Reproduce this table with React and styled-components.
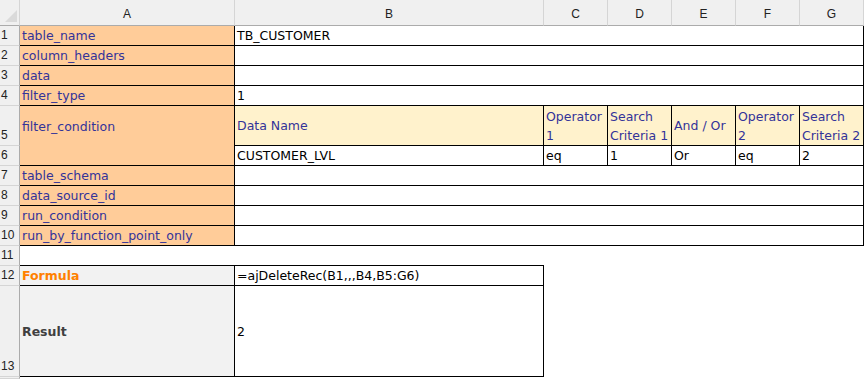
import React from 'react'
import styled, { createGlobalStyle } from 'styled-components'

const Global = createGlobalStyle`
  html, body {
    margin: 0;
    padding: 0;
    background: #fff;
    overflow: hidden;
  }
  #root {
    height: 100vh;
  }
`

const Sheet = styled.div`
  display: grid;
  grid-template-columns: 20px 215px 309px repeat(5, 64px);
  grid-template-rows: 26px repeat(4, 20px) 40px repeat(7, 20px) 91px 1fr;
  height: 100vh;
  width: 864px;
  font-family: "DejaVu Sans", "Liberation Sans", sans-serif;
  font-size: 12.5px;
  color: #000;
  background: #fff;
`

const Corner = styled.div`
  background: #f0f0f0;
  border-right: 1px solid #d5d5d5;
  border-bottom: 1px solid #ababab;
  box-sizing: border-box;
  display: flex;
  align-items: flex-end;
  justify-content: flex-end;
  padding: 0 2px 3px 0;

  svg {
    display: block;
  }
`

const ColHead = styled.div`
  background: #f0f0f0;
  border-right: 1px solid #d5d5d5;
  border-bottom: 1px solid #ababab;
  box-sizing: border-box;
  display: flex;
  align-items: center;
  justify-content: center;
  padding-top: 2px;
  font-family: "Liberation Sans", Arial, sans-serif;
  font-size: 12px;
  color: #222;
`

const RowHead = styled.div`
  background: #f0f0f0;
  border-right: 1px solid #ababab;
  border-bottom: 1px solid #d5d5d5;
  box-sizing: border-box;
  display: flex;
  align-items: flex-end;
  padding: 0 0 1px 1px;
  font-family: "Liberation Sans", Arial, sans-serif;
  font-size: 12px;
  line-height: 17px;
  color: #222;
`

const Cell = styled.div`
  grid-column: span ${p => p.$span || 1};
  box-sizing: border-box;
  border-right: ${p => (p.$r ? '1px solid #000' : 'none')};
  border-bottom: ${p => (p.$b ? '1px solid #000' : 'none')};
  background: ${p => p.$bg || 'transparent'};
  color: ${p => p.$color || '#000'};
  font-weight: ${p => (p.$bold ? 700 : 400)};
  display: flex;
  align-items: ${p => (p.$center ? 'center' : 'flex-end')};
  padding: 0 2px;
  line-height: ${p => (p.$center ? '19px' : '18px')};
  white-space: ${p => (p.$wrap ? 'normal' : 'nowrap')};
  overflow: hidden;
`

const LABEL = { $bg: '#ffcc99', $color: '#333399', $r: true, $b: true }
const HEAD = { $bg: '#fff2cc', $color: '#333399', $r: true, $b: true, $center: true, $wrap: true }
const VALUE = { $r: true, $b: true }

const rows = [
  [{ t: 'table_name', ...LABEL }, { t: 'TB_CUSTOMER', $span: 6, ...VALUE }],
  [{ t: 'column_headers', ...LABEL }, { t: '', $span: 6, ...VALUE }],
  [{ t: 'data', ...LABEL }, { t: '', $span: 6, ...VALUE }],
  [{ t: 'filter_type', ...LABEL }, { t: '1', $span: 6, ...VALUE }],
  [
    { t: 'filter_condition', ...LABEL, $b: false, $center: true },
    { t: 'Data Name', ...HEAD },
    { t: 'Operator 1', ...HEAD },
    { t: 'Search Criteria 1', ...HEAD },
    { t: 'And / Or', ...HEAD },
    { t: 'Operator 2', ...HEAD },
    { t: 'Search Criteria 2', ...HEAD },
  ],
  [
    { t: '', ...LABEL },
    { t: 'CUSTOMER_LVL', ...VALUE },
    { t: 'eq', ...VALUE },
    { t: '1', ...VALUE },
    { t: 'Or', ...VALUE },
    { t: 'eq', ...VALUE },
    { t: '2', ...VALUE },
  ],
  [{ t: 'table_schema', ...LABEL }, { t: '', $span: 6, ...VALUE }],
  [{ t: 'data_source_id', ...LABEL }, { t: '', $span: 6, ...VALUE }],
  [{ t: 'run_condition', ...LABEL }, { t: '', $span: 6, ...VALUE }],
  [{ t: 'run_by_function_point_only', ...LABEL }, { t: '', $span: 6, ...VALUE }],
  [{ t: '', $b: true }, { t: '', $b: true }, { t: '', $span: 5 }],
  [
    { t: 'Formula', $bg: '#f2f2f2', $color: '#ff8000', $bold: true, $r: true, $b: true },
    { t: '=ajDeleteRec(B1,,,B4,B5:G6)', $r: true, $b: true },
    { t: '', $span: 5 },
  ],
  [
    { t: 'Result', $bg: '#f2f2f2', $color: '#404040', $bold: true, $r: true, $b: true, $center: true },
    { t: '2', $r: true, $b: true, $center: true },
    { t: '', $span: 5 },
  ],
]

const columns = ['A', 'B', 'C', 'D', 'E', 'F', 'G']

const App = () => {
  return (
    <>
      <Global />
      <Sheet>
        <Corner>
          <svg width="12" height="12" viewBox="0 0 12 12">
            <polygon points="12,0 12,12 0,12" fill="#dadada" />
          </svg>
        </Corner>
        {columns.map(c => (
          <ColHead key={c}>{c}</ColHead>
        ))}

        {rows.map((cells, i) => (
          <React.Fragment key={i}>
            <RowHead>{i + 1}</RowHead>
            {cells.map(({ t, ...rest }, j) => (
              <Cell key={j} {...rest}>{t}</Cell>
            ))}
          </React.Fragment>
        ))}

        <RowHead />
        <Cell $span={7} />
      </Sheet>
    </>
  )
}

export default App
